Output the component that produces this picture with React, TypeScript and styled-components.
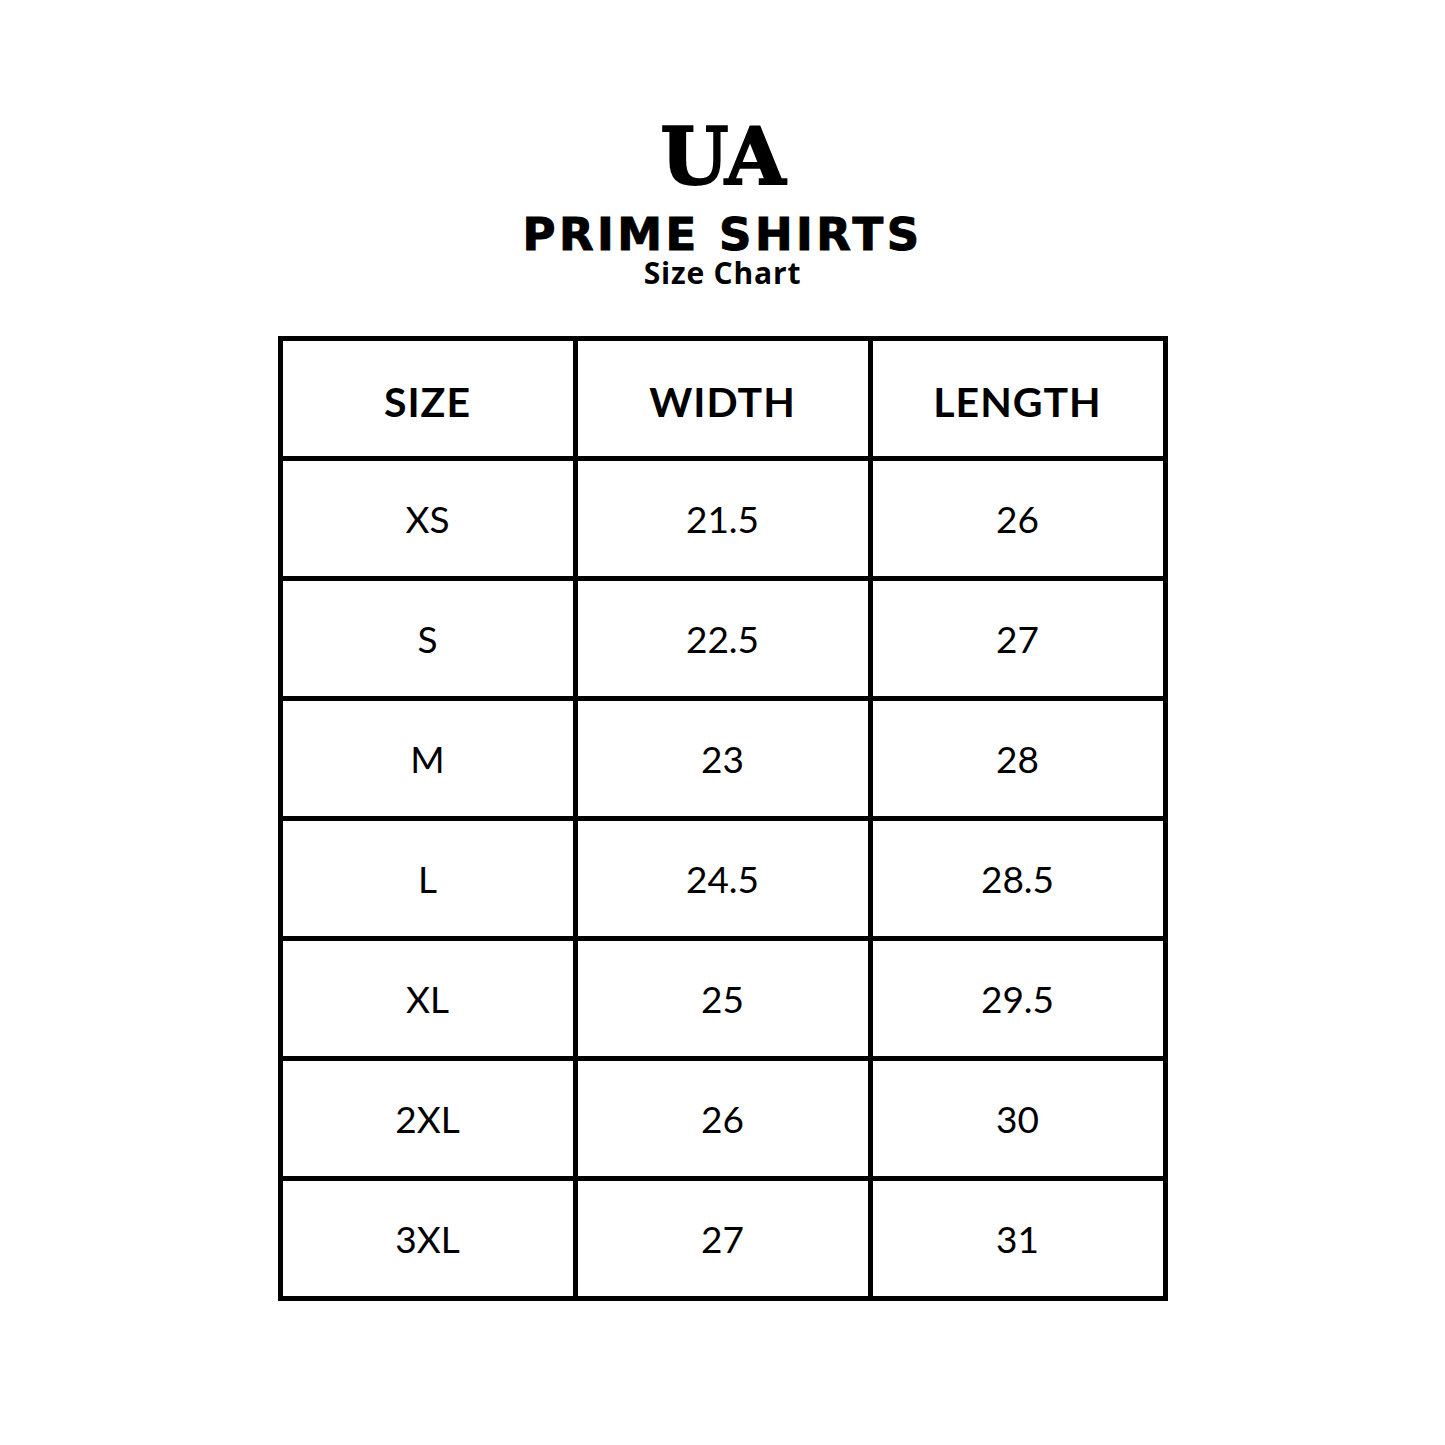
import React from 'react';
import styled, { createGlobalStyle } from 'styled-components';

const GlobalStyle = createGlobalStyle`
  html, body {
    margin: 0;
    padding: 0;
    background: #ffffff;
  }
`;

const Page = styled.div`
  width: 1445px;
  min-height: 1445px;
  display: flex;
  flex-direction: column;
  align-items: center;
  padding-top: 118px;
  box-sizing: border-box;
  background: #ffffff;
  color: #000000;
`;

const Header = styled.header`
  display: flex;
  flex-direction: column;
  align-items: center;
`;

const Logo = styled.div`
  font-family: 'DejaVu Serif', serif;
  font-weight: 700;
  font-size: 78px;
  line-height: 1;
  letter-spacing: -1px;
  -webkit-text-stroke: 2px #000;
`;

const Brand = styled.h1`
  margin: 16px 0 0;
  font-family: 'DejaVu Sans', sans-serif;
  font-weight: 700;
  font-size: 45px;
  line-height: 1;
  letter-spacing: 3.5px;
  -webkit-text-stroke: 1px #000;
`;

const Subtitle = styled.div`
  margin-top: 1px;
  font-family: 'Open Sans', sans-serif;
  font-weight: 700;
  font-size: 30px;
  line-height: 1;
  letter-spacing: 0.8px;
`;

const Table = styled.div`
  margin-top: 48px;
  display: grid;
  grid-template-columns: repeat(3, 290px);
  grid-auto-rows: 115px;
  gap: 5px;
  padding: 5px;
  background: #000000;
`;

const Cell = styled.div<{ $head?: boolean }>`
  background: #ffffff;
  display: flex;
  align-items: center;
  justify-content: center;
  padding-top: ${(p) => (p.$head ? '5px' : '0')};
  font-family: Lato, sans-serif;
  font-weight: ${(p) => (p.$head ? 700 : 400)};
  font-size: ${(p) => (p.$head ? '41px' : '37px')};
  letter-spacing: ${(p) => (p.$head ? '1px' : '0')};
  line-height: 1;
`;

const headings = ['SIZE', 'WIDTH', 'LENGTH'];

const rows: [string, string, string][] = [
  ['XS', '21.5', '26'],
  ['S', '22.5', '27'],
  ['M', '23', '28'],
  ['L', '24.5', '28.5'],
  ['XL', '25', '29.5'],
  ['2XL', '26', '30'],
  ['3XL', '27', '31'],
];

const App: React.FC = () => {
  return (
    <Page>
      <GlobalStyle />
      <Header>
        <Logo>UA</Logo>
        <Brand>PRIME SHIRTS</Brand>
        <Subtitle>Size Chart</Subtitle>
      </Header>
      <Table>
        {headings.map((h) => (
          <Cell $head key={h}>
            {h}
          </Cell>
        ))}
        {rows.map((r) =>
          r.map((v, i) => <Cell key={r[0] + i}>{v}</Cell>)
        )}
      </Table>
    </Page>
  );
};

export default App;
